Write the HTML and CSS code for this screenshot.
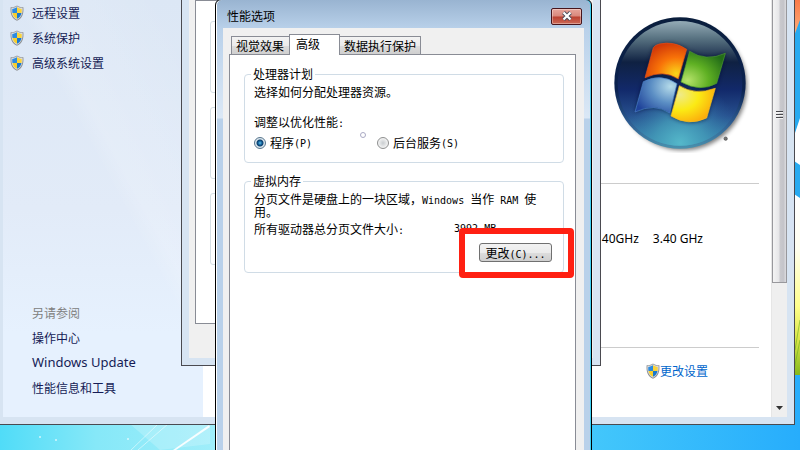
FILE: index.html
```html
<!DOCTYPE html>
<html lang="zh-CN">
<head>
<meta charset="utf-8">
<title>性能选项</title>
<link rel="stylesheet" href="styles.css">
</head>
<body>
<svg class="defs" aria-hidden="true">
  <symbol id="shield" viewBox="0 0 14 16">
    <path d="M7 .4C5.500 1.600 3 2.300.600 2.200.200 8.500 1.200 13 7 15.700 12.800 13 13.800 8.500 13.400 2.200 11 2.300 8.500 1.600 7 .4z" fill="#8d9093"/>
    <path d="M7 1.300C5.500 2.300 3.500 3 1.400 3 1.200 8.200 2.200 12.200 7 14.700 11.800 12.200 12.800 8.200 12.600 3 10.500 3 8.500 2.300 7 1.300z" fill="#dcdfe2"/>
    <path d="M7 2.300C5.600 3.200 4 3.800 2.300 3.900 2.200 5.400 2.200 6.700 2.500 8H7z" fill="#2b8be0"/>
    <path d="M7 2.300C8.400 3.200 10 3.800 11.700 3.900 11.800 5.400 11.800 6.700 11.500 8H7z" fill="#fbd43a"/>
    <path d="M2.500 8C3 10.600 4.400 12.500 7 13.800V8z" fill="#f8cf2c"/>
    <path d="M11.500 8C11 10.600 9.600 12.500 7 13.800V8z" fill="#1878cf"/>
  </symbol>
</svg>

<div class="desktop">
  <svg class="wallpaper" viewBox="0 0 800 450" preserveAspectRatio="none" aria-hidden="true">
    <defs>
      <linearGradient id="sky"><stop offset="0" stop-color="#50dcf8"/><stop offset=".12" stop-color="#86e8f8"/><stop offset=".27" stop-color="#a0eefa"/><stop offset=".72" stop-color="#45c9fb"/><stop offset="1" stop-color="#27adfc"/></linearGradient>
      <linearGradient id="meadow" x2="0" y2="1"><stop offset="0" stop-color="#ffffff"/><stop offset=".3" stop-color="#fffff0"/><stop offset=".62" stop-color="#ffff8c"/><stop offset=".8" stop-color="#dbe64a"/><stop offset="1" stop-color="#84b81c"/></linearGradient>
      <linearGradient id="flame" x2="0" y2="1"><stop offset="0" stop-color="#f97b4a"/><stop offset="1" stop-color="#fdb07c"/></linearGradient>
    </defs>
    <rect width="800" height="450" fill="url(#sky)"/>
    <path d="M130 424h80v20l-50 6z" fill="#fff" opacity=".2"/>
    <path d="M209 425L173 450h3l34-23z" fill="#fff" opacity=".9"/>
    <path d="M158 424l-27 26M168 424l-30 26" stroke="#fff" stroke-opacity=".5"/>
    <g fill="#fff" opacity=".7"><circle cx="40" cy="437" r="1"/><circle cx="56" cy="440" r="1"/><circle cx="128" cy="439" r="1"/></g>
    <path d="M794 0h6v375h-6z" fill="#27aaf0"/>
    <path d="M794 0h6v20l-6 16z" fill="url(#flame)"/>
    <path d="M800 118v47l-6-4v-25z" fill="#fff"/>
    <path d="M794 194l6 4v177h-6z" fill="url(#meadow)"/>
    <path d="M795 350l5-30M794 370l6-30" stroke="#6fae1c" stroke-opacity=".6"/>
  </svg>

  <section class="system">
    <div class="system-body">
      <nav class="sidebar">
        <ul class="tasks">
          <li><svg class="shield"><use href="#shield"/></svg><a href="#">远程设置</a></li>
          <li><svg class="shield"><use href="#shield"/></svg><a href="#">系统保护</a></li>
          <li><svg class="shield"><use href="#shield"/></svg><a href="#">高级系统设置</a></li>
        </ul>
        <ul class="see-also">
          <li class="muted">另请参阅</li>
          <li><a href="#">操作中心</a></li>
          <li><a href="#" class="latin">Windows Update</a></li>
          <li><a href="#">性能信息和工具</a></li>
        </ul>
      </nav>
      <main class="details">
        <svg class="orb" viewBox="30 39 420 420" role="img" aria-label="Windows">
          <defs>
            <linearGradient id="glass" x2="0" y2="1"><stop offset="0" stop-color="#94abb6"/><stop offset=".14" stop-color="#587281"/><stop offset=".33" stop-color="#0f2142"/><stop offset=".55" stop-color="#12296a"/><stop offset=".76" stop-color="#27508e"/><stop offset="1" stop-color="#44a4bd"/></linearGradient>
            <linearGradient id="rim" x2="0" y2="1"><stop offset="0" stop-color="#0a1e3c"/><stop offset=".55" stop-color="#0b2250"/><stop offset=".8" stop-color="#2d5c92"/><stop offset="1" stop-color="#4a92ae"/></linearGradient>
            <radialGradient id="pool" cx=".5" cy=".98" r=".5"><stop offset="0" stop-color="#55b8ca"/><stop offset=".4" stop-color="#4399b8" stop-opacity=".8"/><stop offset="1" stop-color="#2a60a0" stop-opacity="0"/></radialGradient>
            <radialGradient id="red" cx=".75" cy=".85" r=".9"><stop offset="0" stop-color="#fbd51a"/><stop offset=".5" stop-color="#f87208"/><stop offset="1" stop-color="#cf3508"/></radialGradient>
            <radialGradient id="green" cx=".15" cy=".8" r=".95"><stop offset="0" stop-color="#b6e36a"/><stop offset=".5" stop-color="#5fb023"/><stop offset="1" stop-color="#236d18"/></radialGradient>
            <radialGradient id="blue" cx=".85" cy=".25" r=".95"><stop offset="0" stop-color="#b6dcea"/><stop offset=".5" stop-color="#5b8ec4"/><stop offset="1" stop-color="#1f439a"/></radialGradient>
            <radialGradient id="yellow" cx=".2" cy=".25" r=".95"><stop offset="0" stop-color="#efea8a"/><stop offset=".45" stop-color="#fbea14"/><stop offset="1" stop-color="#fb9c0a"/></radialGradient>
            <filter id="soft" x="-20%" y="-20%" width="140%" height="140%"><feGaussianBlur stdDeviation="7"/></filter>
          </defs>
          <circle cx="249" cy="259" r="192" fill="#000" opacity=".5" filter="url(#soft)"/>
          <circle cx="240" cy="249" r="197" fill="url(#rim)"/>
          <circle cx="240" cy="250" r="187" fill="url(#glass)"/>
          <circle cx="240" cy="250" r="187" fill="url(#pool)"/>
          <path d="M160 143Q208 115 260 148L235 237Q190 210 135 233zM269 154Q320 186 376 160L350 252Q300 278 243 246zM130 245Q185 220 231 251L209 339Q165 308 105 336zM238 257Q285 285 346 265L320 354Q265 380 213 348z" fill="#081634" opacity=".8" filter="url(#soft)"/>
          <path d="M160 143Q165 135 178 132Q222 122 260 148L235 237Q190 208 135 233z" fill="url(#red)" stroke="#e8501a" stroke-width="2"/>
          <path d="M269 154Q318 186 376 160L350 250Q300 278 243 246z" fill="url(#green)" stroke="#4fa02c" stroke-width="2"/>
          <path d="M130 245Q183 218 231 251L209 339Q165 308 105 336z" fill="url(#blue)" stroke="#4a7fc8" stroke-width="2"/>
          <path d="M238 257Q285 287 346 265L320 354Q265 380 213 348z" fill="url(#yellow)" stroke="#f7bd22" stroke-width="2"/>
          <circle cx="377" cy="416" r="5" fill="#777" stroke="#444" stroke-width="2"/>
        </svg>
        <hr>
        <p class="cpu">40GHz<span>3.40 GHz</span></p>
        <hr>
        <p class="change"><svg class="shield"><use href="#shield"/></svg><a href="#">更改设置</a></p>
      </main>
      <div class="scrollbar" aria-hidden="true">
        <div class="thumb"><i></i><i></i><i></i></div>
        <svg class="arrow" viewBox="0 0 7 4"><path d="M0 0h7L3.500 4z" fill="#333"/></svg>
      </div>
    </div>
  </section>

  <section class="properties">
    <div class="properties-body">
      <div class="sheet">
        <div class="box"></div>
        <div class="box"></div>
        <div class="box"></div>
      </div>
    </div>
  </section>

  <section class="performance" role="dialog" aria-labelledby="dialog-title">
    <header class="titlebar">
      <h1 id="dialog-title">性能选项</h1>
      <button class="close" type="button" aria-label="关闭"><svg viewBox="0 0 12 10"><path d="M2.500 1.500L9.500 8.500M9.500 1.500L2.500 8.500" stroke="#4c4f5e" stroke-width="4"/><path d="M2.500 1.500L9.500 8.500M9.500 1.500L2.500 8.500" stroke="#fff" stroke-width="2.200"/></svg></button>
    </header>
    <div class="dialog-body">
      <div class="tabs" role="tablist">
        <button type="button" role="tab">视觉效果</button>
        <button type="button" role="tab" class="active" aria-selected="true">高级</button>
        <button type="button" role="tab">数据执行保护</button>
      </div>
      <div class="panel" role="tabpanel">
        <fieldset class="cpu-plan">
          <legend>处理器计划</legend>
          <p>选择如何分配处理器资源。</p>
          <p class="adjust">调整以优化性能<span class="mono">:</span></p>
          <div class="radios">
            <label><input type="radio" name="plan" checked>程序<span class="mono">(P)</span></label>
            <label><input type="radio" name="plan">后台服务<span class="mono">(S)</span></label>
          </div>
        </fieldset>
        <fieldset class="memory">
          <legend>虚拟内存</legend>
          <p>分页文件是硬盘上的一块区域，<span class="mono">Windows </span>当作<span class="mono"> RAM </span>使用。</p>
          <p class="total"><span>所有驱动器总分页文件大小<span class="mono">:</span></span><span class="mono">3992 MB</span></p>
          <button class="change-button" type="button">更改<span class="mono">(C)...</span></button>
        </fieldset>
      </div>
    </div>
    <div class="highlight"></div>
    <div class="pointer-ring"></div>
  </section>
</div>
</body>
</html>
```
FILE: styles.css
```css
* { box-sizing: border-box; }

body {
  margin: 0;
  font: 12px/14px "Noto Sans CJK SC", sans-serif;
  color: #000;
}

p, ul, h1 { margin: 0; padding: 0; }
li { list-style: none; }
button, input { font: inherit; margin: 0; }
a { color: inherit; text-decoration: none; }
svg { display: block; }
.defs { position: absolute; width: 0; height: 0; }

.desktop {
  position: relative;
  height: 100vh;
  overflow: hidden;
}

.wallpaper { width: 100%; height: 100%; }

/* System window */
.system {
  position: absolute;
  left: -4px;
  right: 5px;
  top: -40px;
  bottom: 25px;
  padding: 39px 7px 7px 6px;
  background: #d7e4f2;
  border: 1px solid #4a4a50;
}

.system-body {
  height: 100%;
  display: grid;
  grid-template-columns: 200px 1fr 16px;
  background: #fff;
}

.sidebar {
  display: flex;
  flex-direction: column;
  justify-content: space-between;
  padding: 0 7px 17px;
  line-height: 25px;
  color: #151c55;
  background:
    linear-gradient(62deg, transparent 55%, rgba(255, 255, 255, .15) 60%, transparent 90%),
    linear-gradient(#dce7f5, #e2ebf8 50%, #e6f1fe 80%, #e6f1fe);
}

.sidebar li { display: flex; align-items: center; }
.see-also { padding-left: 22px; }
.muted { color: #808080; }
.latin { font-family: "Noto Sans", sans-serif; font-size: 13px; }

.shield { width: 14px; height: 16px; }
.sidebar .shield { margin-right: 8px; }

.details {
  display: flex;
  flex-direction: column;
  padding-right: 12px;
}

.orb {
  width: 140px;
  height: 140px;
  margin: 13px 9px 0 0;
  align-self: flex-end;
}

hr {
  width: 100%;
  margin: 0;
  border: 0;
  border-top: 1px solid #ccc;
}

.orb + hr { margin-top: 30px; }

.cpu {
  margin: 45px 56px 98px 0;
  font: 12px/20px "Noto Sans", sans-serif;
  text-align: right;
}

.cpu span { margin-left: 14px; }

.change {
  display: flex;
  justify-content: flex-end;
  align-items: center;
  margin: 15px 51px 0 0;
  color: #0066cc;
}

.scrollbar {
  display: flex;
  flex-direction: column;
  justify-content: space-between;
  align-items: center;
  padding-bottom: 7px;
  background: #efefef;
  border-left: 1px solid #e6e6e6;
}

.thumb {
  width: 100%;
  height: 283px;
  padding-top: 111px;
  display: flex;
  flex-direction: column;
  align-items: center;
  gap: 1px;
  background: linear-gradient(90deg, #f4f4f4, #e6e6e8 45%, #c9c9cd 55%, #c4c4c9 80%, #dcdcdf);
  border: 1px solid #98989c;
  border-top: 0;
}

.thumb i {
  width: 7px;
  height: 2px;
  background: #f4f4f4;
  border-top: 1px solid #48484c;
}

.arrow { width: 7px; height: 4px; }

/* System properties, behind the dialog */
.properties {
  position: absolute;
  left: 181px;
  top: -40px;
  width: 420px;
  height: 406px;
  padding: 39px 7px 7px;
  background: #d7e4f2;
  border: 1px solid #4a4a50;
}

.properties-body {
  height: 100%;
  padding: 0 6px 34px;
  background: #f0f0f0;
}

.sheet {
  height: 100%;
  display: flex;
  flex-direction: column;
  gap: 14px;
  padding: 20px 14px 0;
  background: #fff;
  border: 1px solid #898c95;
}

.box {
  height: 72px;
  border: 1px solid #d5dfe5;
  border-radius: 3px;
}

/* Performance options dialog */
.performance {
  position: absolute;
  left: 215px;
  top: -1px;
  width: 377px;
  height: 480px;
  padding: 0 6px;
  background: linear-gradient(#99b4d1, #b9d1ea 29px, #dbe8f6 118px, #b9d1ea 119px);
  border: 1px solid #000;
  border-radius: 6px 6px 0 0;
  box-shadow: inset 1px 0 #fff, inset -1px 0 #3fd0f2;
}

.titlebar {
  height: 28px;
  display: flex;
  justify-content: space-between;
  align-items: center;
  padding: 4px 3px 0 5px;
}

.titlebar h1 { font-size: 12px; font-weight: 400; }

.close {
  width: 31px;
  height: 17px;
  display: grid;
  place-items: center;
  padding: 0;
  background: linear-gradient(#e7a59b, #d9877b 48%, #bb4030 52%, #cc6a58);
  border: 1px solid #47151c;
  border-radius: 2px;
  box-shadow: inset 0 0 0 1px rgba(255, 255, 255, .35);
}

.close svg { width: 12px; height: 10px; }

.dialog-body {
  height: 450px;
  margin: 0 1px;
  padding: 6px 8px 0 6px;
  background: #f0f0f0;
}

.tabs {
  height: 20px;
  display: flex;
  align-items: flex-end;
  padding-left: 2px;
}

.tabs button {
  height: 18px;
  padding: 0 4px;
  line-height: 16px;
  white-space: nowrap;
  background: linear-gradient(#f3f3f3, #ebebeb 50%, #dddddd 51%, #cfcfcf);
  border: 1px solid #898c95;
  border-bottom: 0;
}

.tabs button:first-child { padding-right: 5px; }
.tabs button:last-child { border-left: 0; }

.tabs .active {
  height: 21px;
  margin: 0 0 -1px -1px;
  padding: 0 19px 2px 6px;
  background: #fff;
  position: relative;
}

.panel {
  height: 430px;
  padding: 12px 11px 0 14px;
  background: #fff;
  border: 1px solid #898c95;
}

fieldset {
  min-width: 0;
  margin: 0;
  padding: 0 9px;
  border: 1px solid #d0dce6;
  border-radius: 4px;
}

legend { margin-left: -3px; padding: 0 2px; }

.mono { font: 10px/1px "DejaVu Sans Mono", monospace; white-space: pre-wrap; }

.cpu-plan { height: 96px; margin-bottom: 11px; }
.cpu-plan p { margin-top: 4px; }
.cpu-plan .adjust { margin-top: 16px; }

.radios {
  display: grid;
  grid-template-columns: 123px 1fr;
  margin-top: 7px;
}

.radios label { display: flex; align-items: center; }

.radios input {
  appearance: none;
  width: 12px;
  height: 12px;
  margin-right: 4px;
  background: radial-gradient(#c9cdd0, #f4f4f4 70%);
  border: 1px solid #8e8f8f;
  border-radius: 50%;
}

.radios input:checked {
  background: radial-gradient(circle, #5fc3ee 0, #0f5b94 2px, #0b3f6c 3px, #dde8ef 4px);
  border-color: #56748c;
}

.memory { height: 99px; }
.memory p { margin-top: 4px; padding-right: 8px; line-height: 13px; }
.memory .total { display: flex; align-items: center; margin-top: 4px; gap: 50px; }

.change-button {
  display: block;
  width: 73px;
  height: 19px;
  margin: 8px 2px 0 auto;
  padding: 0;
  line-height: 16px;
  white-space: nowrap;
  background: linear-gradient(#f2f2f2, #ebebeb 50%, #dddddd 51%, #cfcfcf);
  border: 1px solid #707070;
  border-radius: 3px;
}

/* Annotations drawn over the dialog */
.highlight {
  position: absolute;
  left: 243px;
  top: 228px;
  width: 115px;
  height: 50px;
  border: 6px solid #ff2012;
  border-radius: 4px;
}

.pointer-ring {
  position: absolute;
  left: 144px;
  top: 132px;
  width: 6px;
  height: 6px;
  border: 1px solid #aaaac4;
  border-radius: 50%;
}
```
